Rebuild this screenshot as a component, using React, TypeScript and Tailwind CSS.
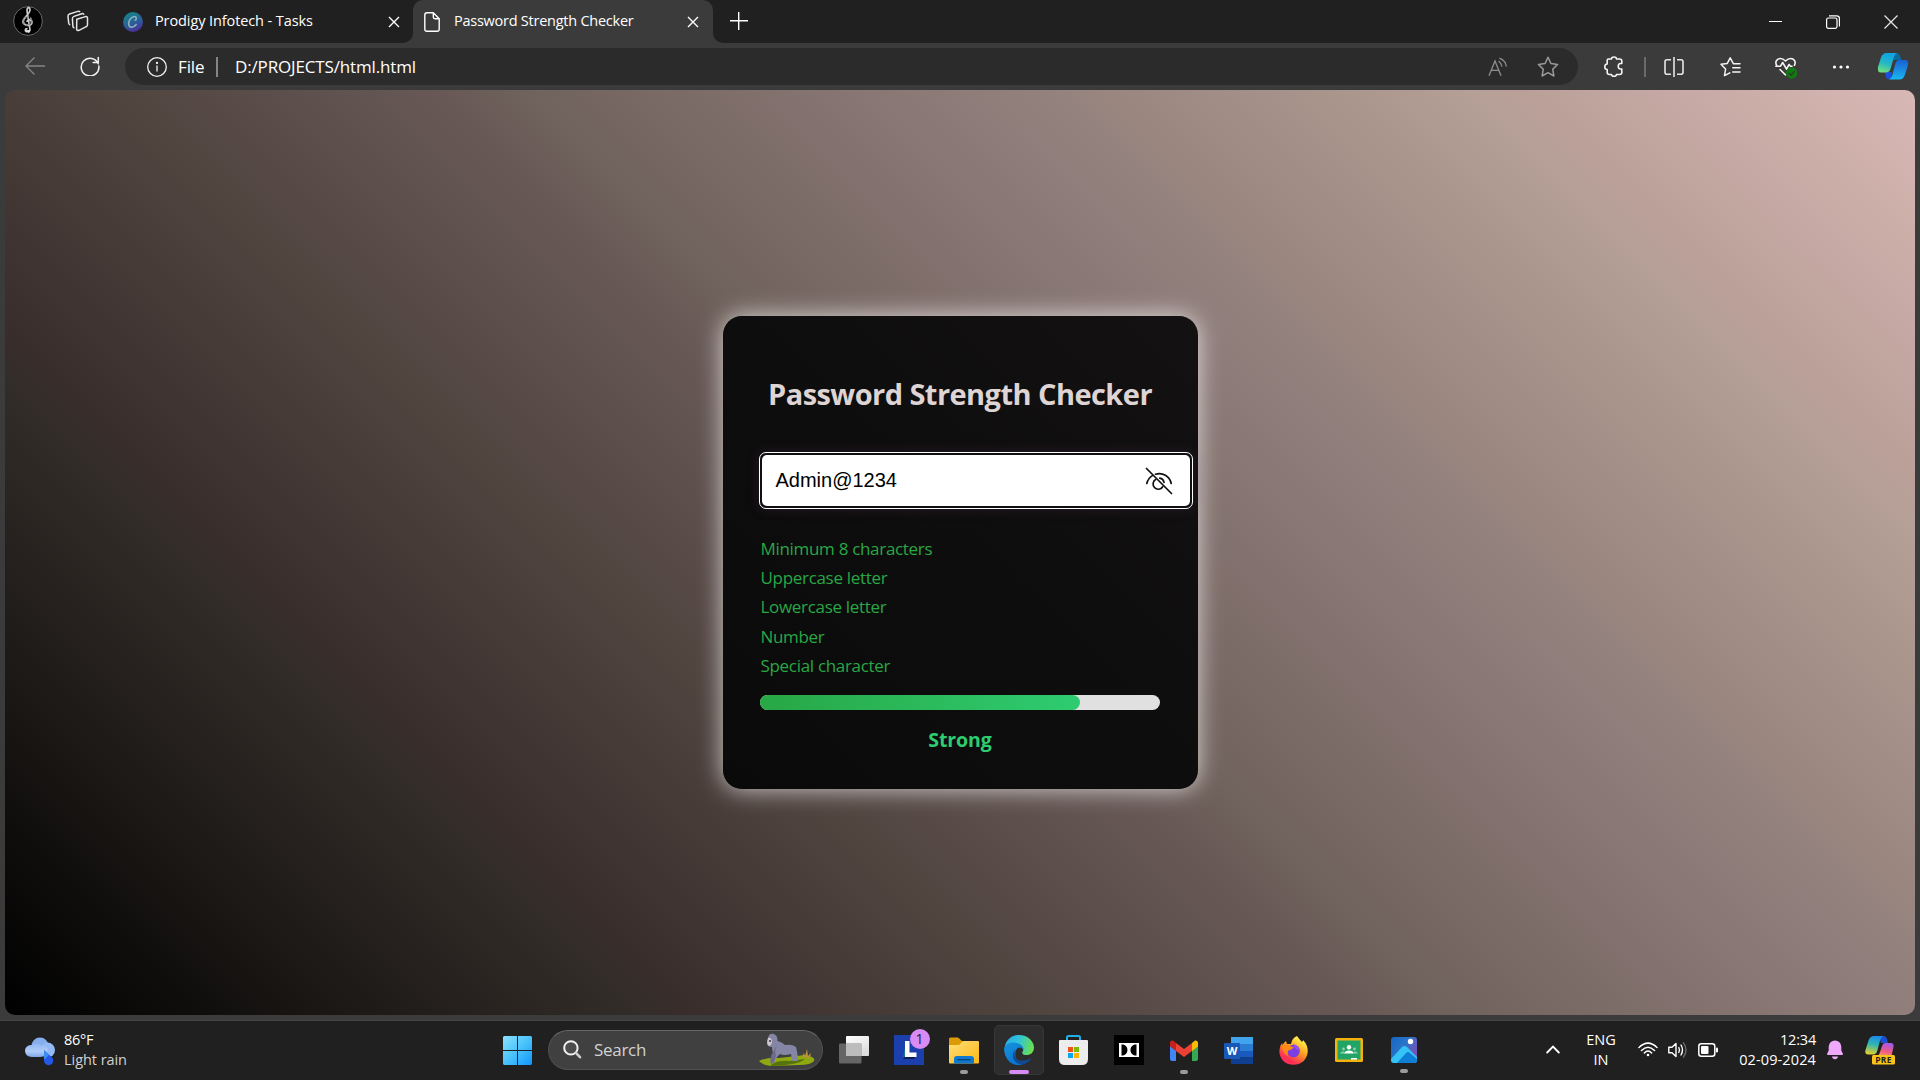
import React from "react";

type P = { children?: React.ReactNode };

const Slot = ({ children }: P) => (
  <div className="flex h-full w-[55px] shrink-0 items-center justify-center">{children}</div>
);

const CloseX = ({ size }: { size: number }) => (
  <svg width={size} height={size} viewBox="0 0 12 12" stroke="#fff" strokeWidth="1.4" fill="none">
    <path d="M1 1L11 11M11 1L1 11" />
  </svg>
);

function TabStrip() {
  return (
    <div className="flex h-[43px] shrink-0 bg-[#202020] text-[14.5px] text-white">
      <div className="flex w-[413px] items-start">
        <svg className="ml-[13px] mt-[6px]" width="30" height="30" viewBox="0 0 30 30" fill="none">
          <circle cx="15" cy="15" r="14.4" fill="#000" stroke="#6a6a6a" />
          <path d="M14 26c-3-1-1.500-4 .5-3M14.500 26.500c4-.5 2-5 1.500-9L14 5c0-4 3-4.500 3-1 0 4-6 7-7 11-1 5 9 6 9 1.500 0-3.500-5-3.500-5-.5" stroke="#c9c9c9" strokeWidth="1.700" />
          <circle cx="14.500" cy="15" r="4" stroke="#8e8e8e" strokeWidth="2" strokeDasharray="2 1" />
          <path d="M13 25h4" stroke="#ddd" strokeWidth="2" />
        </svg>
        <svg className="ml-[23px] mt-[10px]" width="23" height="22" viewBox="0 0 23 22" fill="none" stroke="#e4e4e4" strokeWidth="1.500" strokeLinejoin="round">
          <path d="M10.800 9.200L19.500 6.600Q21.500 6.200 21.500 8.200V14.800Q21.500 16.200 20.200 16.700L13 20.300Q11 21 10.600 19Z" />
          <path d="M18 4.800Q17.500 3.200 15.800 3.700L8 6.400Q6.300 7 6.400 8.600L6.900 16.300Q7.200 17.900 8.500 17.600" />
          <path d="M14 2.200Q13.300 1 11.800 1.400L3.500 4Q1.800 4.600 2 6.400L2.700 13.200Q3 14.800 4.300 14.600" />
        </svg>
        <svg className="ml-[34px] mt-[12px]" width="20" height="20" viewBox="0 0 20 20">
          <defs>
            <linearGradient id="canva" x1="0.300" y1="0" x2="0.700" y2="1">
              <stop offset="0.100" stopColor="#16808c" />
              <stop offset="0.550" stopColor="#2d5d9a" />
              <stop offset="1" stopColor="#4c2a9a" />
            </linearGradient>
          </defs>
          <circle cx="10" cy="10" r="10" fill="url(#canva)" />
          <path d="M12.200 8.300c1.600-.6 1.600-4-.8-3.800C8 4.800 5.200 9 5.700 12.300c.5 4 5 3.700 7.500.2" fill="none" stroke="#8db4be" strokeWidth="1.500" strokeLinecap="round" />
        </svg>
        <span className="ml-[12px] mt-[10px] w-[233px] whitespace-nowrap leading-[22px] tracking-[-0.1px]">Prodigy Infotech - Tasks</span>
        <div className="mt-[16px] w-[24px]"><CloseX size={12} /></div>
      </div>
      <div className="relative flex w-[300px] items-start rounded-t-[10px] bg-[#3b3b3b]">
        <svg className="absolute bottom-0 left-[-10px]" width="10" height="10"><path d="M10 0V10H0A10 10 0 0 0 10 0" fill="#3b3b3b" /></svg>
        <svg className="absolute bottom-0 right-[-10px]" width="10" height="10"><path d="M0 0V10H10A10 10 0 0 1 0 0" fill="#3b3b3b" /></svg>
        <svg className="ml-[11px] mt-[12px]" width="16" height="20" viewBox="0 0 16 20" fill="none" stroke="#fff" strokeWidth="1.400" strokeLinejoin="round">
          <path d="M3 .8H9.300L15.200 6.700V17Q15.200 19.200 13 19.200H3Q.8 19.200 .8 17V3Q.8 .8 3 .8ZM9.300 .8V5Q9.300 6.700 11 6.700H15.200" />
        </svg>
        <span className="ml-[14px] mt-[10px] w-[233px] whitespace-nowrap leading-[22px] tracking-[-0.25px]">Password Strength Checker</span>
        <div className="mt-[16px]"><CloseX size={12} /></div>
      </div>
      <svg className="ml-[17px] mt-[12px]" width="18" height="18" viewBox="0 0 18 18" stroke="#fff" strokeWidth="1.400"><path d="M0 8.700H18M8.700 0V18" /></svg>
      <div className="ml-auto mr-px flex items-center">
        <div className="flex w-[57px] justify-center"><div className="h-px w-[13px] bg-white" /></div>
        <div className="flex w-[58px] justify-center">
          <svg width="14" height="14" viewBox="0 0 14 14" fill="none" stroke="#fff" strokeWidth="1.200">
            <rect x=".6" y="3" width="10.400" height="10.400" rx="1.800" />
            <path d="M3 .8H10.500Q13.400 .8 13.400 3.500V11.500" />
          </svg>
        </div>
        <div className="flex w-[57px] justify-center"><svg width="14" height="14" viewBox="0 0 14 14" stroke="#e8e8e8" strokeWidth="1.200"><path d="M.5 .5L13.500 13.500M13.500 .5L.5 13.500" /></svg></div>
      </div>
    </div>
  );
}

function Toolbar() {
  return (
    <div className="flex h-[47px] shrink-0 bg-[#3b3b3b] pt-[5px] text-white">
      <div className="flex h-[37px] w-[125px] items-center pb-px">
        <svg className="ml-[25px]" width="20" height="18" viewBox="0 0 20 18" fill="none" stroke="#858585" strokeWidth="1.300"><path d="M20 9H1M9.500 .5L1 9L9.500 17.500" /></svg>
        <svg className="ml-[35px]" width="20" height="20" viewBox="0 0 21 21" fill="none" stroke="#f2f2f2" strokeWidth="1.600" strokeLinecap="round" strokeLinejoin="round"><path d="M19.200 8.200A9.300 9.300 0 1 0 19.800 10.500M19.200 1.500V6.800H13.800" /></svg>
      </div>
      <div className="flex h-[37px] w-[1453px] items-center rounded-full bg-[#2b2b2b] text-[17px]">
        <svg className="ml-[22px]" width="20" height="20" viewBox="0 0 20 20" fill="none" stroke="#f2f2f2" strokeWidth="1.300"><circle cx="10" cy="10" r="9.300" /><path d="M10 8.500V14.500" /><circle cx="10" cy="5.900" r=".5" fill="#fff" /></svg>
        <span className="ml-[11px] w-[38px] whitespace-nowrap tracking-[-0.1px]">File</span>
        <div className="h-[20px] w-[2px] bg-[#858585]" />
        <span className="ml-[17px] whitespace-nowrap tracking-[-0.15px]">D:/PROJECTS/html.html</span>
        <svg className="ml-auto" width="20" height="20" viewBox="0 0 20 20" fill="none" stroke="#8e8e8e" strokeWidth="1.300" strokeLinecap="round">
          <path d="M1.200 18.300L7 4L12.800 18.300M3.300 13.300H10.700" /><path d="M11 4.500Q13.300 6.200 13.800 9M11.800 1.300Q17.500 3.300 18.200 9" />
        </svg>
        <svg className="ml-[29px] mr-[19px]" width="22" height="22" viewBox="0 0 22 22" fill="none" stroke="#9a9a9a" strokeWidth="1.500" strokeLinejoin="round"><path d="M11 1.300L13.900 7.500L20.600 8.400L15.700 13.200L16.900 20L11 16.700L5.100 20L6.300 13.200L1.400 8.400L8.100 7.500Z" /></svg>
      </div>
      <div className="ml-[8px] flex h-[37px] items-center">
        <Slot>
          <svg width="20" height="21" viewBox="0 0 20 21" fill="none" stroke="#f4f4f4" strokeWidth="1.600" strokeLinejoin="round">
            <path d="M4.500 3H7.500C7.500 .3 12.500 .3 12.500 3H15.500Q17.800 3 17.800 5V7.500H16.500C13.500 7.800 13.500 12.700 16.500 13H17.800V16.500Q17.800 18.500 15.500 18.500H12.500C12.500 21 7.500 21 7.500 18.500H5.500Q3.200 18.500 3.200 16.500V13.500C0 13.500 0 8 3.200 8V4.300Q3.200 3 4.500 3Z" />
          </svg>
        </Slot>
        <div className="ml-[3px] h-[20px] w-[2px] bg-[#6a6a6a]" />
        <Slot>
          <svg width="20" height="20" viewBox="0 0 20 20" fill="none" stroke="#e6e6e6" strokeWidth="1.600"><path d="M7 2.700H3Q1 2.700 1 4.700V15.300Q1 17.300 3 17.300H7M13 2.700H17Q19 2.700 19 4.700V15.300Q19 17.300 17 17.300H13M10 0V20" /></svg>
        </Slot>
        <div className="ml-[2px] flex h-full items-center">
          <Slot>
            <svg width="21" height="20" viewBox="0 0 21 20" fill="none" stroke="#f4f4f4" strokeWidth="1.500" strokeLinejoin="round" strokeLinecap="round"><path d="M13.500 6.800L10.200 .8L7.300 6.400L1 7.300L5.600 12L4.500 18.600L9.800 15.900M14 6.800H20M12.800 10.700H20M12.800 15H20" /></svg>
          </Slot>
          <Slot>
            <svg width="24" height="24" viewBox="0 0 24 24" fill="none" stroke="#f4f4f4" strokeWidth="1.600" strokeLinecap="round" strokeLinejoin="round">
              <path d="M2.600 10.300C.6 6.500 3.200 3.500 6.300 3.500Q9 3.500 11.500 6Q14 3.500 16.700 3.500C19.800 3.500 22.400 6.500 20.400 10.300M1.800 11.200H6.500L8.700 7.500L12.500 14.200L15 9.500L16.500 11.200H18M6 14.500L11.500 19.800" />
              <circle cx="17.700" cy="18" r="5.700" fill="#137a13" stroke="none" /><path d="M15 18.300L16.900 20.200L20.500 16.400" stroke="#2b3b2b" strokeWidth="1.300" />
            </svg>
          </Slot>
          <Slot>
            <svg width="18" height="4" viewBox="0 0 18 4" fill="#fff"><circle cx="2.500" cy="2" r="1.600" /><circle cx="9" cy="2" r="1.600" /><circle cx="15.500" cy="2" r="1.600" /></svg>
          </Slot>
        </div>
        <svg className="ml-[9px] mb-px" width="32" height="28" viewBox="0 0 32 28">
          <defs>
            <linearGradient id="cpA" x1="0.600" y1="0" x2="0.300" y2="1"><stop offset="0.100" stopColor="#11a4e0" /><stop offset="0.550" stopColor="#26b8c4" /><stop offset="1" stopColor="#6fe07c" /></linearGradient>
            <linearGradient id="cpB" x1="0.400" y1="0" x2="0.300" y2="1"><stop offset="0" stopColor="#1a62d6" /><stop offset="1" stopColor="#19b9ee" /></linearGradient>
          </defs>
          <path d="M15 1H20Q22 1 23 4L24.500 8H17Z" fill="#0b6a9c" />
          <path d="M8 20H15L14 27H11Q9 27 8.500 23Z" fill="#1b4fe0" />
          <path d="M9.500 1H20Q18 1.500 17 5L13.800 16Q12.800 20.500 8.500 20.500H4Q0 20.500 1 15L4 5.500Q5.500 1 9.500 1Z" fill="url(#cpA)" />
          <path d="M22 8H28Q32 8 31 13L28 22.500Q26.500 27.500 22.500 27.500H11.500Q14 27 15.500 22.500L18.300 12Q19.300 8 22 8Z" fill="url(#cpB)" />
        </svg>
      </div>
    </div>
  );
}

const rules = ["Minimum 8 characters", "Uppercase letter", "Lowercase letter", "Number", "Special character"];

function Card() {
  return (
    <div className="flex h-[473px] w-[475px] flex-col rounded-[19px] bg-[linear-gradient(45deg,#0a0a0a,#131111)] px-[37px] shadow-[0_0_25px_rgba(255,255,255,0.75)]">
      <h1 className="mt-[55px] whitespace-nowrap text-center text-[29px] font-bold leading-[46px] tracking-[-0.55px] text-[#ded4d4]">Password Strength Checker</h1>
      <div className="ml-[-1px] mt-[35px] flex h-[57px] w-[434px] shrink-0 items-center justify-between rounded-[7px] border border-white bg-[#101010] p-[2px] shadow-[0_0_12px_rgba(80,50,90,0.35)]">
        <div className="flex h-full w-full items-center justify-between rounded-[5px] bg-white pl-[14px] pr-[17px]">
          <span className="pb-[2px] font-['Liberation_Sans',Arial,sans-serif] text-[20px] leading-[24px] text-black">Admin@1234</span>
          <svg width="28" height="28" viewBox="0 0 28 28" fill="none" stroke="#111" strokeWidth="1.700" strokeLinecap="round">
            <path d="M1.500 1.500L26.500 26.500M1.800 16.500C2.600 12.800 4.600 10.300 7.700 8.400M10.500 7.200C17.500 5 24.800 9 26.200 16.500" />
            <path d="M10.600 12.600A5.200 5.200 0 1 0 17.700 19.800M14.800 11.200A5.200 5.200 0 0 1 19 15.300" />
          </svg>
        </div>
      </div>
      <ul className="mt-[25px] pl-px text-[17px] leading-[29.2px] tracking-[-0.31px] text-[#28a745]">
        {rules.map((r) => <li key={r}>{r}</li>)}
      </ul>
      <div className="mt-[15px] h-[15px] w-[400px] shrink-0 rounded-full bg-[#e0e0e0]">
        <div className="h-full w-4/5 rounded-full bg-linear-to-r from-[#28a745] to-[#2ecc71]" />
      </div>
      <p className="mt-[16px] text-center text-[19.5px] font-bold leading-[28px] tracking-[-0.1px] text-[#2ecc71]">Strong</p>
    </div>
  );
}

const Running = () => <div className="absolute bottom-[-10px] left-1/2 h-[4px] w-[8px] -translate-x-1/2 rounded-full bg-[#9b9b9b]" />;

function Taskbar() {
  return (
    <div className="flex h-[60px] shrink-0 items-center border-t border-[#454545] bg-[#202020] text-white">
      <div className="flex w-[503px] items-center">
        <svg className="ml-[24px]" width="32" height="30" viewBox="0 0 32 30">
          <defs><linearGradient id="cl" x1="0" y1="0" x2="0" y2="1"><stop offset="0" stopColor="#8fb6f2" /><stop offset="0.600" stopColor="#b0cdf9" /><stop offset="1" stopColor="#7ea6ea" /></linearGradient></defs>
          <circle cx="16" cy="10" r="8.500" fill="#86aeee" /><circle cx="23.500" cy="14" r="7.500" fill="#94b9f3" />
          <path d="M8 9Q13 5 18 10Q22 9 24 13Q23 21 16 21H8Q1 20.500 1 14.500Q1.500 9 8 9Z" fill="url(#cl)" />
          <path d="M20 14L27.500 21A4.600 4.600 0 1 1 20 24Z" fill="#2458e8" /><path d="M20 14L25 19L21 23H20Z" fill="#3f8df0" />
        </svg>
        <div className="ml-[8px] whitespace-nowrap pb-[2px] text-[14.5px] leading-[20px]"><div className="tracking-[-0.3px]">86°F</div><div className="tracking-[-0.05px] text-[#d0d0d0]">Light rain</div></div>
      </div>
      <svg width="29" height="29" viewBox="0 0 29 29">
        <defs><linearGradient id="win" x1="0" y1="0" x2="1" y2="1"><stop offset="0" stopColor="#8be2fd" /><stop offset="0.500" stopColor="#4ac3fb" /><stop offset="1" stopColor="#1095fb" /></linearGradient></defs>
        <path d="M1 0H14V14H0V1ZM15 0H28L29 1V14H15ZM0 15H14V29H1L0 28ZM15 15H29V28L28 29H15Z" fill="url(#win)" />
      </svg>
      <div className="mb-px ml-[16px] flex h-[40px] w-[275px] items-center rounded-full border border-[#505050] border-t-[#686868] bg-[#404040]">
        <svg className="ml-[14px]" width="20" height="20" viewBox="0 0 20 20" fill="none" strokeLinecap="round"><circle cx="7.900" cy="7.900" r="6.700" stroke="#f0f0f0" strokeWidth="2" fill="#4c4c4c" /><path d="M12.900 12.900L17 17.200" stroke="#cfcfcf" strokeWidth="2.600" /></svg>
        <span className="ml-[11px] text-[17px] tracking-[-0.3px] text-[#d2d2d2]">Search</span>
        <svg className="ml-auto mr-[7px]" width="56" height="34" viewBox="0 0 56 34">
          <path d="M0 28Q8 24 20 25L46 22Q57 24 55 28Q52 32 40 32L14 33Q3 32 0 28Z" fill="#8fa80f" />
          <path d="M12 32Q18 27 30 28L46 26Q40 32 12 33Z" fill="#55750c" />
          <path d="M43 24L45 20L46 23L48 16L49 23L52 20L51 25Z" fill="#b8923a" />
          <path d="M9 5Q10 0 14 .8Q19 2 18.500 8Q23 9 26 12Q33 11 37 14Q39 20 38.500 28H33.500L32 21Q25 23 21 21Q17 24 15 30L12 31Q11 26 14 20Q13 17 13 14Q8 14 8 10Z" fill="#8586a6" />
          <path d="M18 12Q15 19 17 22L15 29L12 31Q10 25 14 19Z" fill="#6b6a8c" />
          <path d="M9 5Q12 4 13 8Q13 12 10 13Q7 11 9 5Z" fill="#cfc6cf" /><circle cx="11" cy="8" r="1" fill="#333" />
        </svg>
      </div>
      <div className="mb-px ml-[3px] flex h-[50px] items-center">
        <Slot>
          <svg width="30" height="28" viewBox="0 0 30 28">
            <defs><linearGradient id="tv" x1="0" y1="0" x2="0.500" y2="1"><stop offset="0" stopColor="#fff" /><stop offset="1" stopColor="#dcdcdc" /></linearGradient></defs>
            <rect x="7" y="0" width="23" height="20" rx="1" fill="url(#tv)" /><rect x="0" y="7.500" width="22.500" height="20" rx="1" fill="#777" fillOpacity="0.800" /><rect x="7" y="7.500" width="15.500" height="12.500" fill="#bcbcbc" />
          </svg>
        </Slot>
        <Slot>
          <div className="relative h-[30px] w-[30px]">
            <svg width="30" height="30" viewBox="0 0 30 30"><rect width="30" height="30" fill="#1c3fae" /><path d="M9.500 23L12 21H22L20 24H9Z" fill="#101f52" /><path d="M9 23L12 6V20Z" fill="#137a8c" /><path d="M11 6H15.500V17.500H22.500V22H11Z" fill="#fff" /></svg>
            <div className="absolute left-[16px] top-[-6px] flex h-[20px] w-[20px] items-center justify-center rounded-full bg-[#d88af5] text-[14px] leading-none text-[#222]">1</div>
          </div>
        </Slot>
        <Slot>
          <div className="relative">
            <svg width="30" height="27" viewBox="0 0 30 27">
              <defs><linearGradient id="fo" x1="0" y1="0" x2="1" y2="1"><stop offset="0" stopColor="#ffe07a" /><stop offset="1" stopColor="#fcb713" /></linearGradient></defs>
              <path d="M0 2Q0 .5 1.500 .5H9L13 4H28V10H0Z" fill="#dc9b06" /><path d="M0 8H9Q11 8 12 6Q13 4 15 4H29Q30 4 30 5V25.500Q30 26.500 29 26.500H1Q0 26.500 0 25.500Z" fill="url(#fo)" />
              <path d="M5 26.500V22Q5 19 8 19H22Q25 19 25 22V26.500Z" fill="#0f78cf" /><path d="M8.500 22.700H21.500" stroke="#073f73" strokeWidth="1.200" />
            </svg>
            <Running />
          </div>
        </Slot>
        <Slot>
          <div className="relative flex h-[50px] w-[50px] items-center justify-center rounded-[5px] border border-[#373737] bg-[#2d2d2d]">
            <svg width="30" height="30" viewBox="0 0 30 30">
              <defs>
                <linearGradient id="e1" x1="0" y1="0.300" x2="1" y2="0.500"><stop offset="0" stopColor="#2aa9e6" /><stop offset="0.450" stopColor="#2fc3dc" /><stop offset="1" stopColor="#6ce04b" /></linearGradient>
                <linearGradient id="e2" x1="0" y1="0" x2="0.600" y2="1"><stop offset="0" stopColor="#1594dc" /><stop offset="1" stopColor="#0a73d2" /></linearGradient>
              </defs>
              <path d="M.6 12.500C2 4.500 8 0 15 0C24 0 30 6.500 30 12.500C30 17.500 26.500 20 22.500 20C19 20 17.500 18.500 18.500 17C20.500 14 18.500 9.500 12 9.500Q4 9 .6 12.500Z" fill="url(#e1)" />
              <path d="M.1 15C0 10.500 4 7.500 9.500 7.500C16 7.500 20 11.500 19.500 15Q17 11.500 14 13C9 16 11 29 19 29.400Q9 32 3.500 24.500Q.3 20 .1 15Z" fill="url(#e2)" />
              <path d="M12 14.500C8.500 19 11.500 25 17 25.500Q23 26 27.800 22.800Q24 29 17.500 29.600C9.500 29 5.500 19 12 14.500Z" fill="#114a91" />
            </svg>
            <div className="absolute bottom-0 left-[14px] h-[4px] w-[20px] rounded-full bg-[#d88af5]" />
          </div>
        </Slot>
        <Slot>
          <svg width="29" height="30" viewBox="0 0 29 30">
            <path d="M8 6V2.500Q8 1 9.500 1H19.500Q21 1 21 2.500V6" fill="none" stroke="#23aee8" strokeWidth="2" />
            <path d="M1 5H28Q29 5 29 6V24Q29 30 23 30H6Q0 30 0 24V6Q0 5 1 5Z" fill="#ededed" />
            <rect x="9" y="12" width="5" height="5" fill="#f1511b" /><rect x="15" y="12" width="5" height="5" fill="#80bb03" /><rect x="9" y="18" width="5" height="5" fill="#05a6f0" /><rect x="15" y="18" width="5" height="5" fill="#fbb506" />
          </svg>
        </Slot>
        <Slot>
          <svg width="30" height="30" viewBox="0 0 30 30"><rect width="30" height="30" fill="#000" /><rect x="5" y="8" width="20" height="14" fill="#fff" /><path d="M7.500 9.500C15.500 9 15.500 21 7.500 20.500ZM22.500 9.500C14.500 9 14.500 21 22.500 20.500Z" fill="#000" /></svg>
        </Slot>
        <Slot>
          <div className="relative">
            <svg className="my-[3px]" width="28" height="21" viewBox="0 0 28 21"><path d="M0 4L6 8V21H2Q0 21 0 19Z" fill="#4285f4" /><path d="M28 4L22 8V21H26Q28 21 28 19Z" fill="#34a853" /><path d="M22 3L25 .5Q28 0 28 3V6.500L22 11Z" fill="#fbbc04" /><path d="M6 3L14 9L22 3V11L14 17L6 11Z" fill="#ea4335" /><path d="M6 11V3L3.500 .7Q0 0 0 3V6.500Z" fill="#c5221f" /></svg>
            <Running />
          </div>
        </Slot>
        <Slot>
          <svg width="30" height="27" viewBox="0 0 30 27"><path d="M7 0H29V7H7Z" fill="#41a5ee" /><path d="M7 7H29V14H7Z" fill="#2b7cd3" /><path d="M7 14H29V20.500H7Z" fill="#185abd" /><path d="M7 20.500H29V27H7Z" fill="#103f91" /><rect x="0" y="6" width="16" height="16" rx="1" fill="#1858b8" /><text x="8" y="18" textAnchor="middle" fontSize="11" fontWeight="700" fill="#fff" fontFamily="Open Sans">W</text></svg>
        </Slot>
        <Slot>
          <svg width="29" height="29" viewBox="0 0 29 29">
            <defs><linearGradient id="ff" x1="0.900" y1="0" x2="0.300" y2="1"><stop offset="0.150" stopColor="#fff04a" /><stop offset="0.500" stopColor="#ff9a1f" /><stop offset="0.850" stopColor="#ff2f56" /></linearGradient></defs>
            <path d="M18 0Q20 3 23 6Q24 5 24 4Q29 9 28.700 16C28 24 22 28.800 14.500 28.800C6 28.800 0 22.500 .4 14.500Q.5 10 3 7L3.500 9Q5 6.500 7 5L8 8H12Q13 2 18 0Z" fill="url(#ff)" />
            <circle cx="14.500" cy="15" r="6.300" fill="#7b3fe0" /><path d="M14 8Q20 9 20 15L16 12Z" fill="#9a4ff0" /><path d="M3 10Q7 7 12 10.500L15 11.500Q12 14 9 14.500Q8 18 9 20Q3 17 3 10Z" fill="#ff8b16" />
          </svg>
        </Slot>
        <Slot>
          <svg width="28" height="24" viewBox="0 0 28 24"><rect width="28" height="24" rx="1.500" fill="#f4b30c" /><rect x="2.500" y="2.500" width="23" height="19" fill="#21a465" /><circle cx="14" cy="9.300" r="2.200" fill="#fff" /><path d="M9 15.500Q10 12.500 14 12.500T19 15.500Z" fill="#fff" /><circle cx="8.500" cy="11" r="1.400" fill="#8fd0b0" /><circle cx="19.500" cy="11" r="1.400" fill="#8fd0b0" /><path d="M5 15.500Q6 13 9 13.500V15.500ZM23 15.500Q22 13 19 13.500V15.500Z" fill="#8fd0b0" /><rect x="16" y="20" width="6" height="1.600" fill="#fff" /></svg>
        </Slot>
        <Slot>
          <div className="relative">
            <svg width="26" height="26" viewBox="0 0 26 26">
              <defs><linearGradient id="ph" x1="0" y1="0" x2="1" y2="0.600"><stop offset="0" stopColor="#1565c4" /><stop offset="0.500" stopColor="#2a75c8" /><stop offset="1" stopColor="#7a4fb8" /></linearGradient><clipPath id="phc"><rect width="26" height="26" rx="3" /></clipPath></defs>
              <g clipPath="url(#phc)"><rect width="26" height="26" fill="url(#ph)" /><path d="M0 22L11 10Q13.500 8 16 10L26 20V26H0Z" fill="#35c3f5" /><path d="M6 26L15 16Q17 14 19 16L26 22V26Z" fill="#0f7fd6" /><circle cx="19.500" cy="4.500" r="2.700" fill="#fff" /></g>
            </svg>
            <Running />
          </div>
        </Slot>
      </div>
      <div className="mb-[2px] ml-auto flex items-center">
        <svg width="14" height="9" viewBox="0 0 14 9" fill="none" stroke="#fff" strokeWidth="1.800" strokeLinecap="round"><path d="M1.200 7.500L7 1.500L12.800 7.500" /></svg>
        <div className="ml-[20px] w-[42px] text-center text-[14.5px] leading-[20px]"><div>ENG</div><div>IN</div></div>
        <svg className="ml-[16px]" width="20" height="15" viewBox="0 0 20 15" fill="none" stroke="#fff" strokeWidth="1.500" strokeLinecap="round"><path d="M1 5.500Q10-3.300 19 5.500M3.500 8.500Q10 1.800 16.500 8.500M6.300 11Q10 7.200 13.700 11" /><circle cx="10" cy="13" r="1.300" fill="#fff" stroke="none" /></svg>
        <svg className="ml-[10px]" width="20" height="18" viewBox="0 0 20 18" fill="none" stroke="#fff" strokeWidth="1.400" strokeLinecap="round" strokeLinejoin="round"><path d="M.8 6.300H4L8 2.500V15.500L4 11.700H.8Z" /><path d="M10.800 6.500Q12.200 9 10.800 11.500M13 4Q16 9 13 14" /><path d="M15.500 1.800Q20.500 9 15.500 16.200" stroke="#6a6a6a" /></svg>
        <svg className="ml-[10px]" width="20" height="14" viewBox="0 0 20 14"><rect x=".8" y=".8" width="16" height="12.400" rx="2.500" fill="none" stroke="#fff" strokeWidth="1.500" /><rect x="3" y="3" width="7.500" height="8" rx="1" fill="#fff" /><rect x="18" y="4.500" width="2" height="5" rx="1" fill="#fff" /></svg>
        <div className="w-[98px] whitespace-nowrap text-right text-[14.5px] leading-[20px]"><div className="tracking-[-0.2px]">12:34</div><div className="tracking-[0.12px]">02-09-2024</div></div>
        <svg className="ml-[11px]" width="16" height="20" viewBox="0 0 16 20" fill="#f0a8fb"><path d="M8 .5A6.300 6.300 0 0 1 14.300 6.800V10.500L16 14Q16 15 15 15H1Q0 15 0 14L1.700 10.500V6.800A6.300 6.300 0 0 1 8 .5ZM5 16.500H11Q10.500 19.300 8 19.300T5 16.500Z" /></svg>
        <svg className="ml-[22px] mr-[25px] mt-[2px]" width="30" height="29" viewBox="0 0 30 29">
          <defs>
            <linearGradient id="pa" x1="0.500" y1="0" x2="0.300" y2="1"><stop offset="0" stopColor="#1e8bea" /><stop offset="0.450" stopColor="#2fb6b0" /><stop offset="1" stopColor="#e5d02a" /></linearGradient>
            <linearGradient id="pb" x1="0.600" y1="0" x2="0.300" y2="1"><stop offset="0" stopColor="#a35ae6" /><stop offset="0.600" stopColor="#f05a86" /><stop offset="1" stopColor="#f89a5a" /></linearGradient>
          </defs>
          <path d="M14 0H19Q21 0 22 3L23 7H16Z" fill="#1b4fd0" />
          <path d="M9 0H18Q16 1 15 4.500L12.500 14Q11.500 18.500 8 18.500H3Q-.5 18.500 .5 14L3.500 4.500Q5 0 9 0Z" fill="url(#pa)" />
          <path d="M20 7H26Q29 7 28.500 11L26.500 20H11Q14 20 15 16L17 10Q18 7 20 7Z" fill="url(#pb)" />
          <rect x="7" y="19" width="23" height="9.500" rx="1.500" fill="#fcc419" /><text x="18.500" y="26.700" textAnchor="middle" fontSize="8.500" fontWeight="700" letterSpacing="0.300" fill="#222" fontFamily="Open Sans">PRE</text>
        </svg>
      </div>
    </div>
  );
}

export default function App() {
  return (
    <div className="flex h-[1080px] w-[1920px] flex-col overflow-hidden bg-[#3b3b3b] font-['Open_Sans','Noto_Sans',sans-serif]">
      <TabStrip />
      <Toolbar />
      <main className="mx-[5px] mb-[5px] flex min-h-0 flex-1 items-center justify-center rounded-[10px] bg-[linear-gradient(45deg,#000_0%,#191614_11%,#332d29_22.5%,#382d2b_24%,#50443f_36%,#685956_48%,#70625c_51%,#7b6b67_56%,#94827f_69.6%,#98857e_71%,#b6a097_84.8%,#ba9f99_86%,#d8b8b4_100%)]">
        <Card />
      </main>
      <Taskbar />
    </div>
  );
}
